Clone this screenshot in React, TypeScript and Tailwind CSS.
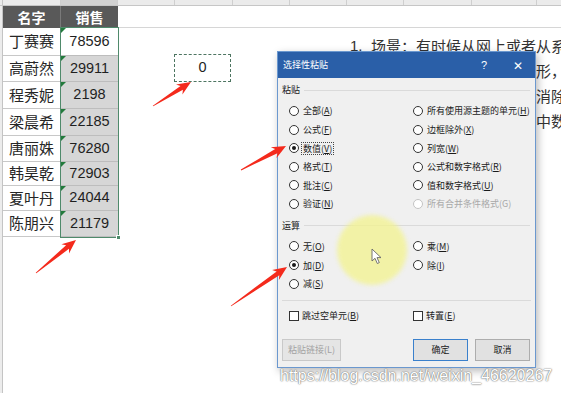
import React from 'react';

const names = ['丁赛赛', '高蔚然', '程秀妮', '梁晨希', '唐丽姝', '韩昊乾', '夏叶丹', '陈朋兴'];
const sales = [78596, 29911, 2198, 22185, 76280, 72903, 24044, 21179];
const rowHeights = [28, 26, 27, 27, 26, 24, 25, 26];
const colWidths = [58, 57, 57, 58, 57, 57, 57, 68, 65];

type Opt = { label: string; k: string; checked?: boolean; disabled?: boolean; focus?: boolean };

const pasteLeft: Opt[] = [
  { label: '全部', k: 'A' },
  { label: '公式', k: 'F' },
  { label: '数值', k: 'V', checked: true, focus: true },
  { label: '格式', k: 'T' },
  { label: '批注', k: 'C' },
  { label: '验证', k: 'N' },
];
const pasteRight: Opt[] = [
  { label: '所有使用源主题的单元', k: 'H' },
  { label: '边框除外', k: 'X' },
  { label: '列宽', k: 'W' },
  { label: '公式和数字格式', k: 'R' },
  { label: '值和数字格式', k: 'U' },
  { label: '所有合并条件格式', k: 'G', disabled: true },
];
const opRows: (Opt | null)[][] = [
  [{ label: '无', k: 'O' }, { label: '乘', k: 'M' }],
  [{ label: '加', k: 'D', checked: true }, { label: '除', k: 'I' }],
  [{ label: '减', k: 'S' }, null],
];

const Radio = ({ opt }: { opt: Opt }) => (
  <div className="flex h-[18.6px] items-center">
    <span
      className={`flex h-[10px] w-[10px] shrink-0 items-center justify-center rounded-full border bg-white ${
        opt.disabled ? 'border-[#c4c4c4]' : 'border-[#333]'
      }`}
    >
      {opt.checked && <span className="h-[4px] w-[4px] rounded-full bg-[#1a1a1a]" />}
    </span>
    <span
      className={`ml-[2px] whitespace-nowrap px-[1px] leading-[11px] ${
        opt.focus ? 'border border-dotted border-[#444]' : 'border border-transparent'
      } ${opt.disabled ? 'text-[#a8a8a8]' : 'text-[#1a1a1a]'}`}
    >
      {opt.label}(
      {opt.disabled ? opt.k : <span className="underline">{opt.k}</span>})
    </span>
  </div>
);

const Check = ({ label, k }: { label: string; k: string }) => (
  <div className="flex h-[18.6px] items-center">
    <span className="h-[10px] w-[10px] shrink-0 border border-[#333] bg-white" />
    <span className="ml-[3px] whitespace-nowrap text-[#1a1a1a]">
      {label}(<span className="underline">{k}</span>)
    </span>
  </div>
);

const SectionLabel = ({ text }: { text: string }) => (
  <div className="flex h-[14px] items-center pl-[4px] pr-[5px]">
    <span className="text-[#1a1a1a]">{text}</span>
    <span className="ml-[4px] h-px flex-1 bg-[#dadada]" />
  </div>
);

// red pointer arrow from tail (x1,y1) to tip (x2,y2)
const arrowPoints = (x1: number, y1: number, x2: number, y2: number) => {
  const dx = x2 - x1;
  const dy = y2 - y1;
  const L = Math.hypot(dx, dy);
  const ux = dx / L;
  const uy = dy / L;
  const nx = -uy;
  const ny = ux;
  const h = 13;
  const pt = (a: number, b: number) => `${(x1 + ux * a + nx * b).toFixed(1)},${(y1 + uy * a + ny * b).toFixed(1)}`;
  return [pt(0, 0.4), pt(L - h + 2, 2.3), pt(L - h - 1, 6), pt(L, 0), pt(L - h - 1, -6), pt(L - h + 2, -2.3), pt(0, -0.4)].join(' ');
};

const arrows: [number, number, number, number][] = [
  [153, 106, 191, 82],
  [36, 273, 76, 240],
  [231, 306, 287, 267],
  [241, 170, 286, 146],
];

const App = () => {
  return (
    <div className="relative flex h-[393px] w-[561px] flex-col overflow-hidden bg-white font-['Noto_Sans_CJK_SC',sans-serif]">
      {/* column header strip */}
      <div className="flex h-[6px] shrink-0 border-b border-[#c6c6c6] bg-[#ebebeb]">
        <div className="w-[3px] border-r border-[#c6c6c6]" />
        {colWidths.map((w, i) => (
          <div
            key={i}
            className={`shrink-0 border-r border-[#cfcfcf] ${i === 1 ? 'bg-[#d2d2d2]' : ''}`}
            style={{ width: w }}
          />
        ))}
      </div>

      <div className="flex flex-1">
        {/* row header gutter */}
        <div className="w-[3px] shrink-0 border-r border-[#c4c4c4] bg-[#ececec]" />

        {/* table */}
        <div className="flex shrink-0 flex-col">
          <div className="flex h-[22px] text-[14px] font-bold text-white">
            <div className="flex w-[58px] items-center justify-center border-r border-[#7a7a7a] bg-[#595959]">名字</div>
            <div className="flex w-[57px] items-center justify-center bg-[#595959]">销售</div>
          </div>
          <div className="flex">
            <div className="flex w-[58px] flex-col">
              {names.map((n, i) => (
                <div
                  key={n}
                  className="flex items-center justify-center border-r border-b border-[#c8c8c8] text-[15px] text-[#262626]"
                  style={{ height: rowHeights[i] }}
                >
                  {n}
                </div>
              ))}
            </div>
            <div className="relative flex w-[57px] flex-col outline outline-[1.5px] outline-[#4f8a6b]">
              {sales.map((s, i) => (
                <div
                  key={s}
                  className={`relative flex items-center justify-center border-b border-[#bdbdbd] font-['Liberation_Sans',sans-serif] text-[14.5px] text-[#1f1f1f] ${
                    i === 0 ? 'bg-white' : 'bg-[#d6d6d6]'
                  }`}
                  style={{ height: rowHeights[i] }}
                >
                  <span className="absolute top-0 left-0 h-0 w-0 border-t-[5px] border-r-[5px] border-t-[#237a3c] border-r-transparent" />
                  {s}
                </div>
              ))}
              <span className="absolute -right-[3px] -bottom-[3px] h-[5px] w-[5px] border border-white bg-[#4f8a6b]" />
            </div>
          </div>
        </div>

        {/* rest of the sheet */}
        <div className="flex min-w-0 flex-1 flex-col">
          <div className="h-[22px] shrink-0 border-b border-[#d6d6d6]" />
          <div className="flex">
            <div className="ml-[56px] mt-[26px] flex h-[28px] w-[57px] shrink-0 items-center justify-center border-[1.5px] border-dashed border-[#4d7561] font-['Liberation_Sans',sans-serif] text-[14.5px] text-[#1f1f1f]">
              0
            </div>
            <div className="ml-[119px] mt-[5px] whitespace-nowrap text-[15px] leading-[25px] text-[#333]">
              <div className="flex">
                <span className="w-[21px] shrink-0 font-['Liberation_Sans',sans-serif]">1.</span>
                <span>场景：有时候从网上或者从系统中导出的数据</span>
              </div>
              <div className="pl-[21px]">导出数据为文本数字的情形，无法进行计算</div>
              <div className="pl-[21px]">用选择性粘贴加零的方法消除文本格式</div>
              <div className="pl-[21px]">使之转为数值，方便表格中数据的计算</div>
            </div>
          </div>
        </div>
      </div>

      {/* paste special dialog */}
      <div className="absolute top-[51px] left-[277px] flex h-[317px] w-[259px] flex-col border border-[#6b98cf] bg-[#f0f0f0] text-[9px] shadow-[2px_3px_8px_rgba(0,0,0,0.28)]">
        <div className="flex h-[26px] shrink-0 items-center bg-[#2a5fa8] pl-[5px] text-white">
          <span className="flex-1">选择性粘贴</span>
          <span className="flex w-[34px] justify-center font-['Liberation_Sans',sans-serif] text-[11px]">?</span>
          <span className="flex w-[34px] justify-center text-[12px]">✕</span>
        </div>

        <div className="mt-[5px]">
          <SectionLabel text="粘贴" />
        </div>
        <div className="mt-[4.7px] grid grid-cols-[124px_1fr] pl-[11px]">
          {pasteLeft.map((o, i) => (
            <React.Fragment key={o.k}>
              <Radio opt={o} />
              <Radio opt={pasteRight[i]} />
            </React.Fragment>
          ))}
        </div>

        <div className="mt-[5.7px]">
          <SectionLabel text="运算" />
        </div>
        <div className="mt-[4.2px] grid grid-cols-[124px_1fr] pl-[11px]">
          {opRows.map((r, i) => (
            <React.Fragment key={i}>
              {r[0] ? <Radio opt={r[0]} /> : <div />}
              {r[1] ? <Radio opt={r[1]} /> : <div />}
            </React.Fragment>
          ))}
        </div>

        <div className="mx-[4px] mt-[7px] h-px bg-[#dadada]" />

        <div className="mt-[6px] grid grid-cols-[124px_1fr] pl-[11px]">
          <Check label="跳过空单元" k="B" />
          <Check label="转置" k="E" />
        </div>

        <div className="mt-[13.4px] flex h-[22px] pl-[4px] pr-[5px]">
          <div className="flex w-[59px] items-center justify-center border border-[#c9c9c9] bg-[#e5e5e5] text-[#a2a2a2]">
            粘贴链接(L)
          </div>
          <div className="ml-auto flex w-[55px] items-center justify-center border-[1.5px] border-[#3a80cc] bg-[#e1e1e1] text-[#1a1a1a]">
            确定
          </div>
          <div className="ml-[7px] flex w-[55px] items-center justify-center border border-[#adadad] bg-[#e1e1e1] text-[#1a1a1a]">
            取消
          </div>
        </div>
      </div>

      {/* mouse highlight */}
      <div className="absolute top-[215px] left-[337px] h-[70px] w-[70px] rounded-full bg-[#f3f38e]/75 blur-[2px]" />
      <svg className="absolute top-[248px] left-[371px]" width="12" height="17" viewBox="0 0 12 17">
        <path d="M1 1 L1 13 L4 10.3 L6.3 15.5 L8.3 14.6 L6 9.6 L10 9.6 Z" fill="#fff" stroke="#666" strokeWidth="0.9" />
      </svg>

      {/* annotation arrows */}
      <svg className="pointer-events-none absolute inset-0" width="561" height="393">
        {arrows.map((a, i) => (
          <polygon key={i} points={arrowPoints(...a)} fill="#f42a1c" />
        ))}
      </svg>

      {/* watermark */}
      <div className="absolute top-[364px] left-[280px] whitespace-nowrap font-['Liberation_Sans',sans-serif] text-[16px] text-white [text-shadow:0_0_1px_#555,0_0_2px_#8a8a8a]">
        https://blog.csdn.net/weixin_46620267
      </div>
    </div>
  );
};

export default App;
